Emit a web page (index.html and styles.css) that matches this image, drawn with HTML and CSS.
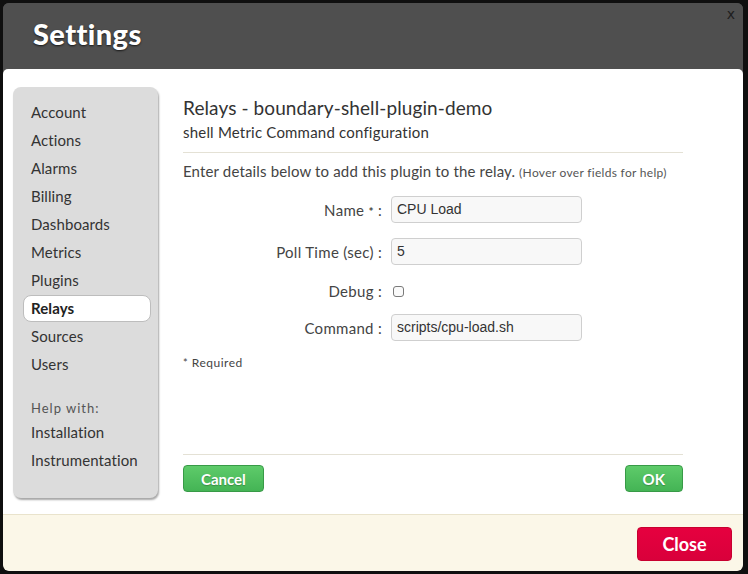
FILE: index.html
```html
<!DOCTYPE html>
<html>
<head>
<meta charset="utf-8">
<link rel="stylesheet" href="styles.css">
</head>
<body>
<div class="dialog">
  <div class="header">
    <h1 class="title">Settings</h1>
    <span class="x">x</span>
  </div>
  <div class="body">
    <nav class="sidebar">
      <a class="item">Account</a>
      <a class="item">Actions</a>
      <a class="item">Alarms</a>
      <a class="item">Billing</a>
      <a class="item">Dashboards</a>
      <a class="item">Metrics</a>
      <a class="item">Plugins</a>
      <a class="item active">Relays</a>
      <a class="item">Sources</a>
      <a class="item">Users</a>
      <div class="help">Help with:</div>
      <a class="item">Installation</a>
      <a class="item">Instrumentation</a>
    </nav>
    <main class="main">
      <h2 class="h2">Relays - boundary-shell-plugin-demo</h2>
      <div class="sub">shell Metric Command configuration</div>
      <div class="rule"></div>
      <p class="intro">Enter details below to add this plugin to the relay. <small class="hint">(Hover over fields for help)</small></p>
      <div class="form">
        <div class="row">
          <label class="label">Name <b class="star">*</b> :</label>
          <div class="input">CPU Load</div>
        </div>
        <div class="row">
          <label class="label">Poll Time (sec) :</label>
          <div class="input">5</div>
        </div>
        <div class="row row-check">
          <label class="label">Debug :</label>
          <span class="check"></span>
        </div>
        <div class="row">
          <label class="label">Command :</label>
          <div class="input">scripts/cpu-load.sh</div>
        </div>
      </div>
      <div class="req"><span class="star">*</span> Required</div>
      <div class="spacer"></div>
      <div class="rule rule-bottom"></div>
      <div class="actions">
        <button class="btn">Cancel</button>
        <button class="btn">OK</button>
      </div>
    </main>
  </div>
  <div class="footer">
    <button class="close">Close</button>
  </div>
</div>
</body>
</html>
```

FILE: styles.css
```css
html, body {
  margin: 0;
  padding: 0;
  background: #0f0f0f;
  width: 748px;
  height: 574px;
  overflow: hidden;
}
body {
  font-family: "Lato", "Open Sans", sans-serif;
  color: #333;
}
.dialog {
  margin: 3px 0 0 3px;
  width: 740px;
  height: 568px;
  display: flex;
  flex-direction: column;
  border-radius: 6px;
  overflow: hidden;
  background: #4f4f4f;
}
.header {
  height: 66px;
  flex: none;
  position: relative;
  background: #4f4f4f;
  display: flex;
  align-items: center;
  padding-left: 30px;
  box-sizing: border-box;
}
.title {
  margin: 0;
  font-size: 29px;
  font-weight: 900;
  color: #fff;
  letter-spacing: 0.4px;
  text-shadow: 0 1px 2px rgba(0,0,0,0.7);
  line-height: 30px;
  margin-top: -5px;
}
.x {
  position: absolute;
  right: 8px;
  top: 3px;
  font-size: 14px;
  color: #1e1e1e;
  font-family: "DejaVu Sans", sans-serif;
}
.body {
  flex: 1;
  background: #fff;
  border-radius: 5px 5px 0 0;
  display: flex;
  padding: 18px 0 22px 10px;
  box-sizing: border-box;
}
.sidebar {
  width: 145px;
  flex: none;
  background: #dcdcdc;
  border-radius: 8px;
  box-shadow: 1px 2px 2px rgba(0,0,0,0.35);
  padding-top: 11px;
  box-sizing: border-box;
  display: flex;
  flex-direction: column;
  margin-bottom: -6px;
}
.item {
  display: block;
  height: 28px;
  line-height: 26px;
  margin: 0 7px 0 10px;
  padding: 0 7px;
  border: 1px solid transparent;
  border-radius: 8px;
  font-size: 15px;
  color: #333;
  letter-spacing: 0.1px;
  box-sizing: border-box;
}
.item.active {
  background: #fff;
  border-color: #bdbdbd;
  font-weight: 700;
  color: #222;
  height: 27px;
  line-height: 25px;
  margin-bottom: 1px;
  margin-top: 1px;
  margin-bottom: 0;
}
.help {
  margin: 20px 0 0 18px;
  height: 20px;
  line-height: 20px;
  font-size: 13px;
  letter-spacing: 1px;
  color: #555;
}
.main {
  width: 500px;
  margin-left: 25px;
  display: flex;
  flex-direction: column;
  padding-top: 8px;
}
.h2 {
  margin: 0;
  font-size: 19px;
  font-weight: 400;
  line-height: 26px;
  color: #333;
  letter-spacing: 0.1px;
}
.sub {
  font-size: 15px;
  line-height: 20px;
  margin-top: 1px;
  color: #333;
  letter-spacing: 0.2px;
}
.rule {
  height: 1px;
  background: #e4e1d5;
  margin-top: 10px;
}
.intro {
  margin: 8px 0 0;
  font-size: 15px;
  line-height: 20px;
  color: #444;
  letter-spacing: 0.15px;
}
.hint {
  font-size: 12px;
  color: #555;
  letter-spacing: 0.3px;
}
.form {
  margin-top: 13px;
  display: flex;
  flex-direction: column;
  gap: 15px;
}
.row {
  display: flex;
  align-items: center;
  height: 27px;
}
.row-check {
  height: 22px;
  margin-bottom: -3px;
}
.label {
  width: 208px;
  text-align: right;
  font-size: 15px;
  color: #444;
  padding-right: 9px;
  box-sizing: border-box;
  letter-spacing: 0.3px;
}
.star {
  font-weight: 700;
  font-size: 12px;
}
.input {
  width: 191px;
  height: 27px;
  box-sizing: border-box;
  border: 1px solid #cfcfcf;
  border-radius: 4px;
  background: #f8f8f8;
  font-family: "Liberation Sans", Arial, sans-serif;
  font-size: 14px;
  line-height: 25px;
  padding-left: 5px;
  color: #333;
}
.check {
  width: 11px;
  height: 11px;
  margin-left: 2px;
  border: 1px solid #7a7a7a;
  border-radius: 3px;
  background: #fafafa;
  box-sizing: border-box;
}
.req {
  margin-top: 14px;
  font-size: 12px;
  line-height: 16px;
  color: #444;
  letter-spacing: 0.5px;
}
.req .star {
  font-weight: 400;
  font-size: 11px;
}
.spacer {
  flex: 1;
}
.rule-bottom {
  margin-top: 0;
}
.actions {
  display: flex;
  justify-content: space-between;
  margin-top: 10px;
}
.btn {
  height: 27px;
  min-width: 57px;
  padding: 0 17px;
  border: 1px solid #389a47;
  border-radius: 4px;
  background: linear-gradient(#5ecb6a, #44b455);
  color: #fff;
  font-family: "Lato", sans-serif;
  font-size: 15px;
  font-weight: 700;
  text-shadow: 0 1px 1px rgba(0,0,0,0.25);
  box-sizing: border-box;
}
.footer {
  height: 57px;
  flex: none;
  background: #fbf7e8;
  border-top: 1px solid #e9e3cc;
  border-radius: 0 0 5px 5px;
  display: flex;
  justify-content: flex-end;
  align-items: center;
  padding-right: 11px;
  box-sizing: border-box;
}
.close {
  width: 95px;
  height: 34px;
  border: 1px solid #c8002f;
  border-radius: 4px;
  background: linear-gradient(#e6003f, #d9003b);
  color: #fff;
  font-family: "Lato", sans-serif;
  font-size: 18px;
  font-weight: 700;
  margin-top: 2px;
}
```
